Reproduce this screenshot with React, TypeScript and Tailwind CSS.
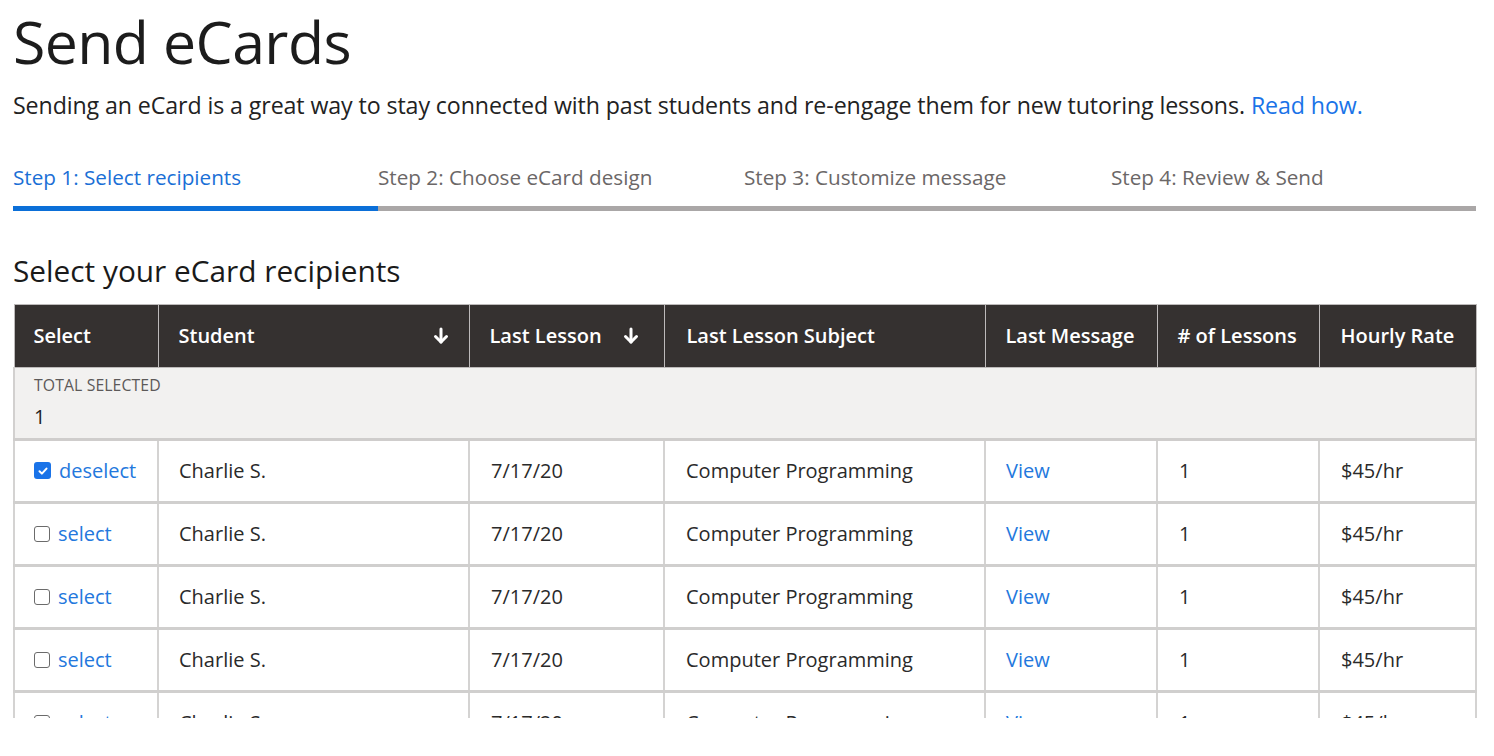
import React from "react";

const cols = [144, 311, 195, 321, 172, 162, 157];

function DownArrow() {
  return (
    <svg width="16" height="18" viewBox="0 0 16 18" fill="none">
      <path d="M8 2v13" stroke="white" strokeWidth="3" strokeLinecap="round" />
      <path d="M2.5 9.5L8 15l5.5-5.5" stroke="white" strokeWidth="3" strokeLinecap="round" strokeLinejoin="round" />
    </svg>
  );
}

function Checkbox({ checked }: { checked: boolean }) {
  if (checked) {
    return (
      <span className="inline-flex w-[17px] h-[17px] rounded-[3px] bg-[#1a73e8] items-center justify-center mr-[8px]">
        <svg width="12" height="12" viewBox="0 0 12 12">
          <path d="M2.5 6.2l2.4 2.4 4.6-5" stroke="white" strokeWidth="2" fill="none" strokeLinecap="round" strokeLinejoin="round" />
        </svg>
      </span>
    );
  }
  return <span className="inline-block w-[16px] h-[16px] rounded-[3px] border border-[#6b6b6b] bg-white mr-[8px]" />;
}

const rows = [true, false, false, false, false];

export default function App() {
  return (
    <div className="bg-white w-[1494px] h-[756px] overflow-hidden text-[#222]" style={{ fontFamily: '"Open Sans", sans-serif' }}>
      <div className="pl-[13px] pr-[18px]">
        <h1 className="text-[59px] leading-none pt-[12px] text-[#1c1c1c] tracking-[-0.6px]">Send eCards</h1>
        <p className="text-[23.2px] mt-[23px] text-[#222] leading-none tracking-[-0.1px] whitespace-nowrap">
          Sending an eCard is a great way to stay connected with past students and re-engage them for new tutoring lessons.{" "}
          <span className="text-[#1a73e8]">Read how.</span>
        </p>
        <div className="mt-[50px] flex text-[20.7px] leading-none">
          <div className="w-[365px] text-[#1a6fd6]">Step 1: Select recipients</div>
          <div className="w-[366px] text-[#6b6767]">Step 2: Choose eCard design</div>
          <div className="w-[367px] text-[#6b6767]">Step 3: Customize message</div>
          <div className="text-[#6b6767]">Step 4: Review &amp; Send</div>
        </div>
        <div className="mt-[18px] flex h-[5px]">
          <div className="w-[365px] bg-[#0b6fd8]" />
          <div className="flex-1 bg-[#aaa7a7]" />
        </div>
        <h2 className="text-[29.8px] font-medium leading-none mt-[45px] text-[#1a1a1a]">Select your eCard recipients</h2>
        <div className="mt-[18px] h-[414px] overflow-hidden w-[1465px]">
          <table className="border-collapse table-fixed w-[1462px] text-[20px]">
            <colgroup>
              {cols.map((w, i) => (
                <col key={i} style={{ width: w }} />
              ))}
            </colgroup>
            <thead>
              <tr className="bg-[#353130] text-white h-[63px] text-left">
                <th className="font-semibold px-[19px] border border-[#bdbaba]">Select</th>
                <th className="font-semibold px-[20px] border border-[#bdbaba]">
                  <div className="flex items-center justify-between">
                    <span>Student</span>
                    <DownArrow />
                  </div>
                </th>
                <th className="font-semibold px-[20px] border border-[#bdbaba]">
                  <div className="flex items-center gap-[21px]">
                    <span>Last Lesson</span>
                    <DownArrow />
                  </div>
                </th>
                <th className="font-semibold px-[22px] border border-[#bdbaba]">Last Lesson Subject</th>
                <th className="font-semibold px-[20px] border border-[#bdbaba]">Last Message</th>
                <th className="font-semibold px-[20px] border border-[#bdbaba]">
                  # of Lessons
                </th>
                <th className="font-semibold px-[21px] border border-[#bdbaba]">Hourly Rate</th>
              </tr>
            </thead>
            <tbody>
              <tr className="bg-[#f2f1f0] border-x-2 border-x-[#d2d0cf] border-b-[3px] border-b-[#cfcdcc]">
                <td colSpan={7} className="px-[19px] pt-[10px] pb-[11px]">
                  <div className="text-[15.8px] text-[#5c5959] leading-none tracking-[0.1px]">TOTAL SELECTED</div>
                  <div className="text-[20px] text-[#222] leading-none mt-[13px]">1</div>
                </td>
              </tr>
              {rows.map((checked, i) => (
                <tr key={i} className="h-[63px] border-b-[3px] border-b-[#d0cfce] text-[#2a2a2a]">
                  <td className="pl-[19px] border-l-2 border-r-2 border-[#d4d3d2]">
                    <div className="flex items-center">
                      <Checkbox checked={checked} />
                      <span className="text-[#2378dd]">{checked ? "deselect" : "select"}</span>
                    </div>
                  </td>
                  <td className="pl-[20px] border-r-2 border-[#d4d3d2]">Charlie S.</td>
                  <td className="pl-[21px] border-r-2 border-[#d4d3d2]">7/17/20</td>
                  <td className="pl-[21px] border-r-2 border-[#d4d3d2]">Computer Programming</td>
                  <td className="pl-[20px] border-r-2 border-[#d4d3d2] text-[#2378dd]">View</td>
                  <td className="pl-[21px] border-r-2 border-[#d4d3d2]">1</td>
                  <td className="pl-[21px] border-r-2 border-[#d4d3d2]">$45/hr</td>
                </tr>
              ))}
            </tbody>
          </table>
        </div>
      </div>
    </div>
  );
}
